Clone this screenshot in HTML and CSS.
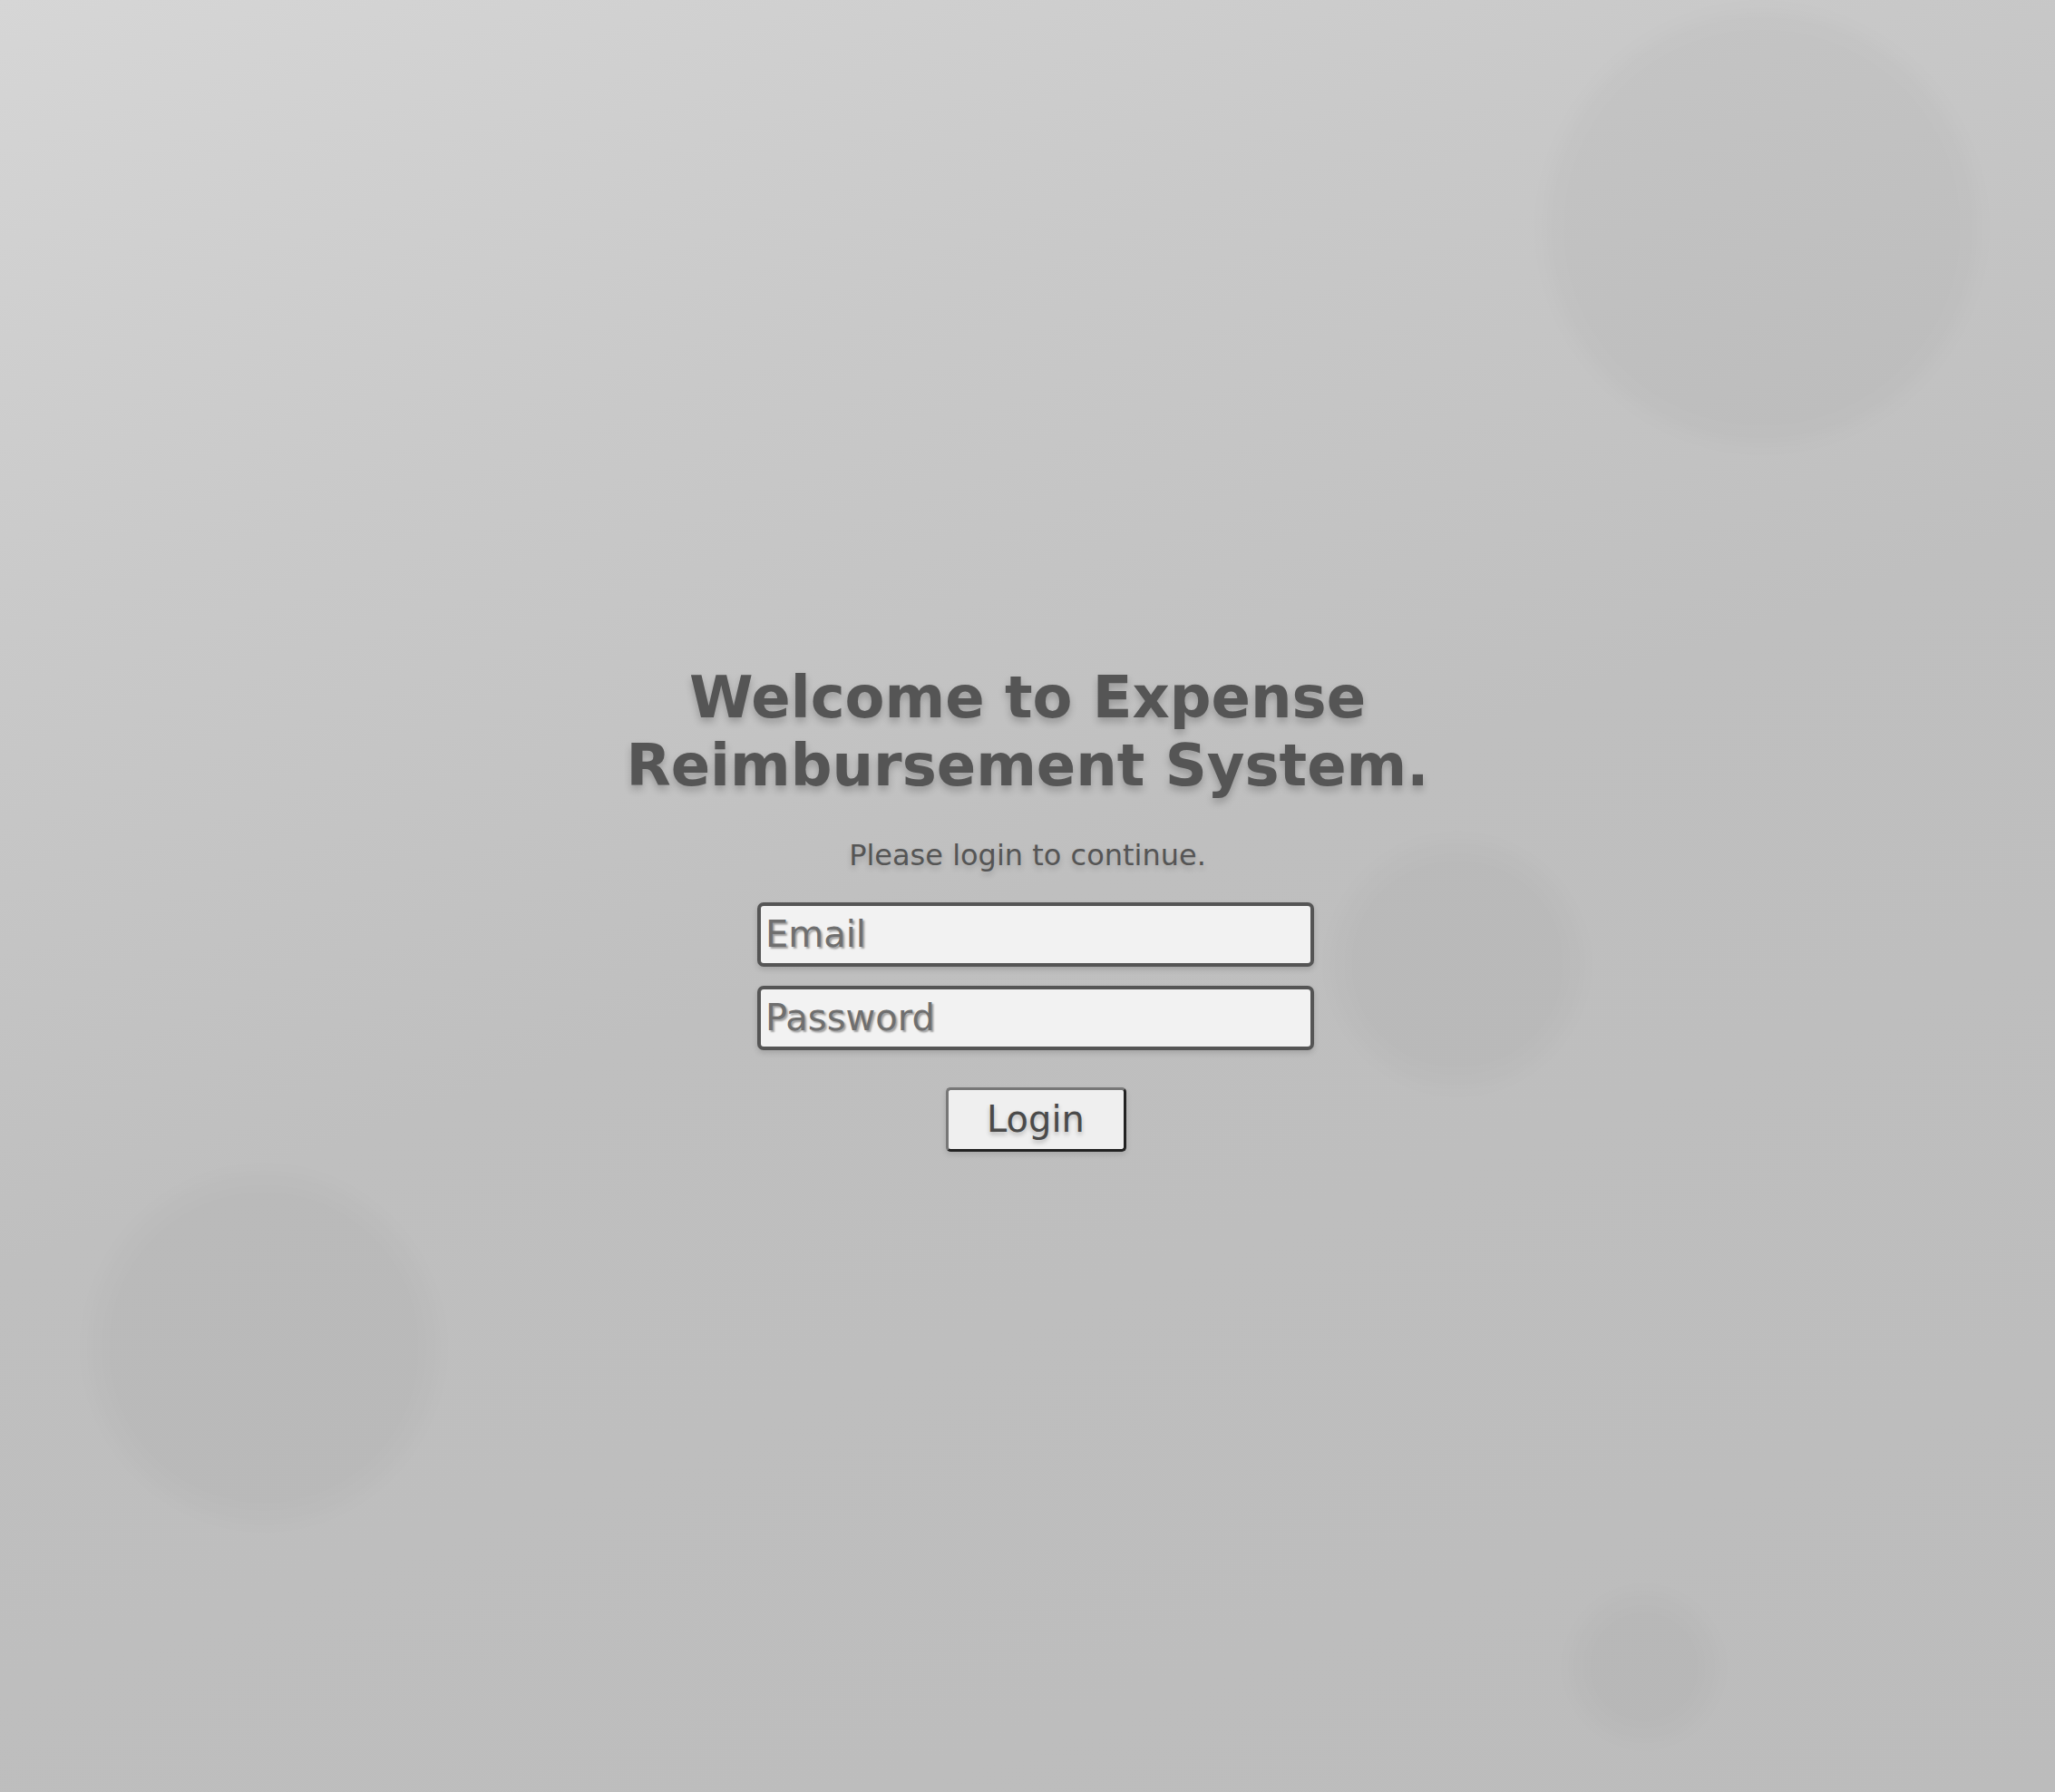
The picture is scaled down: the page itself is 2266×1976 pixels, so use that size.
FILE: index.html
```html
<!DOCTYPE html>
<html lang="en">
<head>
<meta charset="utf-8">
<title>Expense Reimbursement System</title>
<link rel="stylesheet" href="styles.css">
</head>
<body>
<div class="blob blob-a"></div>
<div class="blob blob-b"></div>
<div class="blob blob-c"></div>
<div class="blob blob-d"></div>
<main class="login">
  <h1 class="title">Welcome to Expense<br>Reimbursement System.</h1>
  <p class="subtitle">Please login to continue.</p>
  <form class="form">
    <input class="field" type="email" placeholder="Email">
    <input class="field" type="password" placeholder="Password">
    <button class="btn" type="button">Login</button>
  </form>
</main>
</body>
</html>
```
FILE: styles.css
```css
html, body {
  margin: 0;
  height: 100%;
}
body {
  position: relative;
  overflow: hidden;
  font-family: Verdana, "DejaVu Sans", sans-serif;
  background: linear-gradient(160deg, #d6d6d6 0%, #c9c9c9 25%, #bfbfbf 50%, #bcbcbc 100%);
  display: flex;
  align-items: center;
  justify-content: center;
}
.blob {
  position: absolute;
  border-radius: 50%;
  background: rgba(0, 0, 0, 0.022);
  filter: blur(12px);
}
.blob-a { left: 1708px; top: 16px; width: 470px; height: 470px; }
.blob-b { left: 1474px; top: 932px; width: 266px; height: 262px; }
.blob-c { left: 104px; top: 1298px; width: 374px; height: 376px; }
.blob-d { left: 1737px; top: 1761px; width: 152px; height: 154px; }
.login {
  position: relative;
  display: flex;
  flex-direction: column;
  align-items: center;
  text-align: center;
  color: #555;
  padding-top: 26px;
}
.title {
  margin: 0;
  font-size: 64px;
  font-weight: bold;
  line-height: 1.164;
  text-shadow: 0 5px 8px rgba(0, 0, 0, 0.22);
}
.subtitle {
  margin: 44px 0 0;
  font-size: 32px;
  line-height: 1.164;
  text-shadow: 0 4px 6px rgba(0, 0, 0, 0.18);
}
.form {
  margin: 32px 0 0 18px;
  display: flex;
  flex-direction: column;
  align-items: center;
}
.field {
  box-sizing: border-box;
  width: 614px;
  height: 71px;
  margin: 0 0 21px;
  padding: 0 5px;
  border: 4px solid #555;
  border-radius: 7px;
  background: #f2f2f2;
  font-family: Verdana, "DejaVu Sans", sans-serif;
  font-size: 40px;
  color: #444;
  box-shadow: 0 3px 6px rgba(0, 0, 0, 0.15);
  outline: none;
}
.field::placeholder {
  color: #6f6f6f;
  text-shadow: 2px 2px 2px rgba(0, 0, 0, 0.35);
}
.btn {
  box-sizing: border-box;
  width: 199px;
  height: 71px;
  margin: 20px 0 0;
  padding: 0;
  border: 3px solid;
  border-color: #777 #222 #222 #777;
  border-radius: 5px;
  background: #efefef;
  font-family: Verdana, "DejaVu Sans", sans-serif;
  font-size: 40px;
  color: #4a4a4a;
  text-shadow: 0 3px 5px rgba(0, 0, 0, 0.25);
  box-shadow: 0 3px 6px rgba(0, 0, 0, 0.12);
}
```
